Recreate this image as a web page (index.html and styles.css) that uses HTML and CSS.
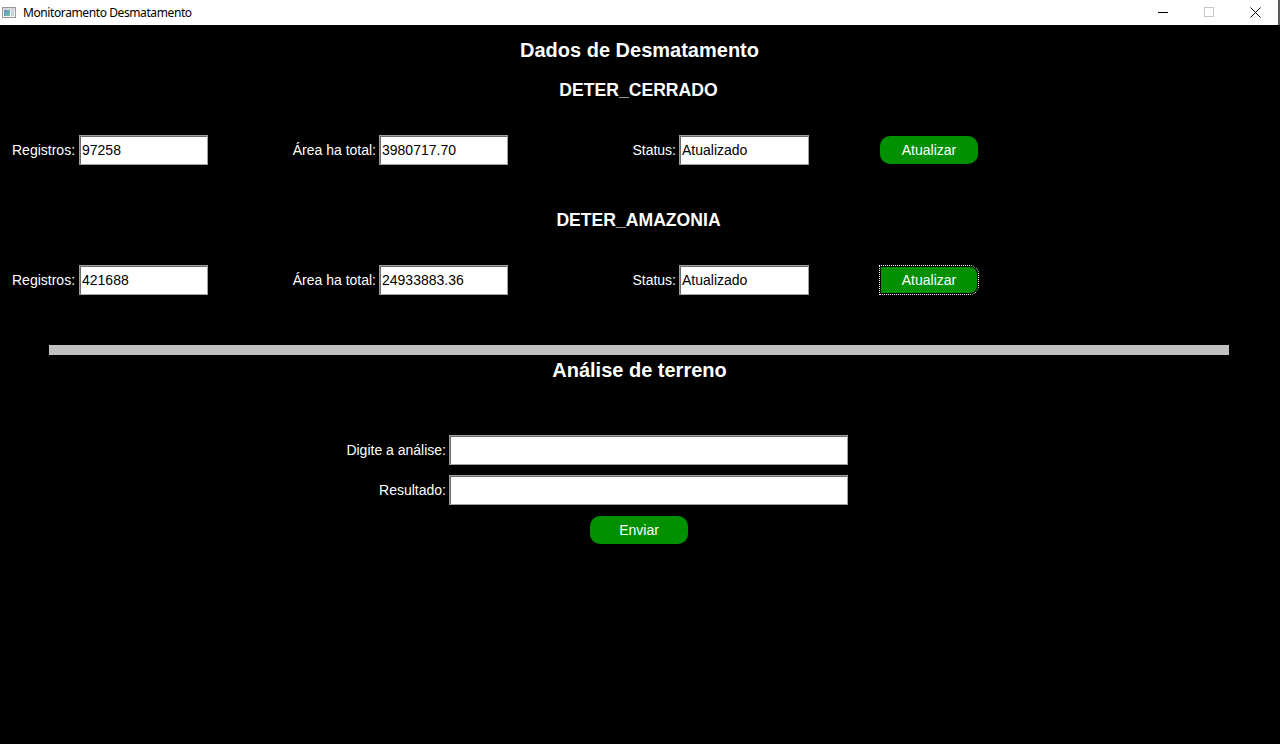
FILE: index.html
```html
<!DOCTYPE html>
<html lang="pt">
<head>
<meta charset="utf-8">
<title>Monitoramento Desmatamento</title>
<link rel="stylesheet" href="styles.css">
</head>
<body>
<div class="window">
  <div class="titlebar">
    <div class="title-left">
      <svg class="app-icon" width="16" height="16" viewBox="0 0 16 16">
        <defs>
          <linearGradient id="g" x1="0" y1="0" x2="1" y2="1">
            <stop offset="0" stop-color="#5b8fc9"/>
            <stop offset="1" stop-color="#7cc0a8"/>
          </linearGradient>
        </defs>
        <rect x="1.5" y="3.5" width="13" height="10" fill="#f4f4f4" stroke="#9a9a9a"/>
        <rect x="2" y="4" width="12" height="2" fill="#d8d8d8"/>
        <rect x="3" y="6" width="6" height="6" fill="url(#g)"/>
        <rect x="10" y="6" width="3" height="6" fill="#c8d4dc"/>
      </svg>
      <span class="title-text">Monitoramento Desmatamento</span>
    </div>
    <div class="controls">
      <div class="ctl">
        <svg width="10" height="10" viewBox="0 0 10 10"><path d="M0 5.5h10" stroke="#000" stroke-width="1"/></svg>
      </div>
      <div class="ctl">
        <svg width="10" height="10" viewBox="0 0 10 10"><rect x="0.5" y="0.5" width="9" height="9" fill="none" stroke="#c7c7c7"/></svg>
      </div>
      <div class="ctl">
        <svg width="11" height="11" viewBox="0 0 11 11"><path d="M0.5 0.5L10.5 10.5M10.5 0.5L0.5 10.5" stroke="#000" stroke-width="1"/></svg>
      </div>
    </div>
  </div>

  <main class="content">
    <h1 class="h-main">Dados de Desmatamento</h1>

    <h2 class="h-sub first">DETER_CERRADO</h2>
    <div class="data-row">
      <label class="lbl lbl-first">Registros:</label>
      <div class="field">97258</div>
      <label class="lbl">Área ha total:</label>
      <div class="field">3980717.70</div>
      <label class="lbl">Status:</label>
      <div class="field">Atualizado</div>
      <span></span>
      <button class="btn">Atualizar</button>
    </div>

    <h2 class="h-sub second">DETER_AMAZONIA</h2>
    <div class="data-row">
      <label class="lbl lbl-first">Registros:</label>
      <div class="field">421688</div>
      <label class="lbl">Área ha total:</label>
      <div class="field">24933883.36</div>
      <label class="lbl">Status:</label>
      <div class="field">Atualizado</div>
      <span></span>
      <button class="btn focused">Atualizar</button>
    </div>

    <div class="separator"></div>

    <h1 class="h-analysis">Análise de terreno</h1>

    <div class="form-grid">
      <label class="lbl">Digite a análise:</label>
      <div class="field wide"></div>
      <label class="lbl">Resultado:</label>
      <div class="field wide"></div>
    </div>
    <div class="send-row">
      <button class="btn">Enviar</button>
    </div>
  </main>
</div>
</body>
</html>
```

FILE: styles.css
```css
* { box-sizing: border-box; }

html, body {
  margin: 0;
  padding: 0;
  background: #000;
}

.window {
  width: 1280px;
  height: 744px;
  background: #000;
  display: flex;
  flex-direction: column;
  font-family: "Liberation Sans", Arial, sans-serif;
}

.titlebar {
  height: 25px;
  background: #fff;
  display: flex;
  justify-content: space-between;
  align-items: stretch;
  border-right: 2px solid #5a5a5a;
  flex-shrink: 0;
}

.title-left {
  display: flex;
  align-items: center;
  padding-left: 1px;
  gap: 6px;
}

.app-icon { display: block; margin-top: -1px; }

.title-text {
  font-family: "Noto Sans", "Liberation Sans", sans-serif;
  font-size: 12px;
  letter-spacing: -0.4px;
  color: #000;
  margin-top: -1px;
}

.controls {
  display: flex;
}

.ctl {
  width: 46px;
  display: flex;
  align-items: center;
  justify-content: center;
  padding-bottom: 1px;
}

.ctl svg { display: block; }

.content {
  display: flex;
  flex-direction: column;
  color: #fff;
  font-size: 14px;
}

.h-main, .h-analysis {
  margin: 0;
  font-size: 20px;
  font-weight: bold;
  line-height: 24px;
  text-align: center;
  padding-right: 1px;
}

.h-main { margin-top: 13px; }

.h-sub {
  margin: 0;
  font-size: 17.6px;
  font-weight: bold;
  line-height: 20px;
  text-align: center;
  padding-right: 3px;
}

.h-sub.first { margin-top: 18px; }
.h-sub.second { margin-top: 45px; }

.data-row {
  display: grid;
  grid-template-columns: 67px 129px 171px 129px 171px 130px 71px 98px;
  align-items: center;
  padding-left: 12px;
  margin-top: 35px;
  height: 30px;
}

.lbl {
  text-align: right;
  padding-right: 3px;
  color: #fff;
  font-size: 14px;
  white-space: nowrap;
}

.lbl-first { text-align: left; padding-left: 0; }

.field {
  height: 30px;
  background: #fff;
  color: #000;
  border: 1px solid #a0a0a0;
  box-shadow: inset 1px 1px 0 #6d6d6d;
  padding: 0 2px;
  font-size: 14px;
  line-height: 28px;
  white-space: nowrap;
  overflow: hidden;
}

.btn {
  height: 28px;
  width: 98px;
  border: none;
  border-radius: 10px;
  background: #009000;
  color: #fff;
  font-family: "Liberation Sans", Arial, sans-serif;
  font-size: 14px;
  padding: 0;
  margin: 0;
  align-self: center;
  cursor: default;
}

.btn.focused {
  outline: 1px dotted #fff;
  outline-offset: 0;
  border-radius: 0 8px 8px 0;
  box-shadow: inset 0 0 0 1px #000;
}

.separator {
  margin: 50px 0 0 49px;
  width: 1180px;
  height: 10px;
  background: #c0c0c0;
}

.h-analysis { margin-top: 3px; }

.form-grid {
  display: grid;
  grid-template-columns: 449px 399px;
  row-gap: 10px;
  margin-top: 53px;
  align-items: center;
}

.field.wide { width: 399px; }

.send-row {
  display: flex;
  padding-left: 590px;
  margin-top: 11px;
}
```
